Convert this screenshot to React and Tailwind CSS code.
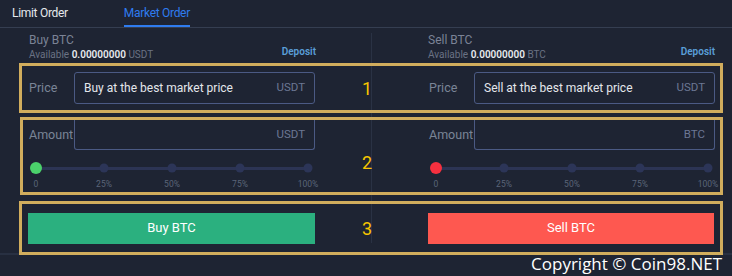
const LABELS = ['0', '25%', '50%', '75%', '100%'];
const SPOTS = ['left-0', 'left-1/4', 'left-1/2', 'left-3/4', 'left-full'];

function Info({ title, unit }) {
  return (
    <div className="w-[287px]">
      <p className="text-[12px] leading-[15px] text-[#7b8396]">{title}</p>
      <div className="flex h-[14px] items-center justify-between">
        <p className="text-[10px] leading-[14px] text-[#6a7284]">
          Available <span className="font-semibold text-[#e9ebef]">0.00000000</span> {unit}
        </p>
        <span className="mb-[6px] text-[10px] font-semibold leading-[12px] text-[#5a9fd9]">Deposit</span>
      </div>
    </div>
  );
}

function Field({ label, text, unit, open }) {
  return (
    <div className="flex w-[287px] items-start">
      <span className={`w-[46px] pl-px text-[12.5px] text-[#7a8497] ${open ? 'leading-[30px]' : 'leading-[32px]'}`}>{label}</span>
      <div
        className={`flex w-[241px] items-center justify-between rounded-[3px] border border-[#4b5a84] px-[9px] ${
          open ? 'h-[30px] rounded-t-none border-t-0' : 'h-[32px]'
        }`}
      >
        <span className="text-[12px] text-[#e4e7ec]">{text}</span>
        <span className="text-[11.5px] text-[#6c7794]">{unit}</span>
      </div>
    </div>
  );
}

function Slider({ color }) {
  return (
    <div className="w-[287px]">
      <div className="relative ml-[8px] mr-[7px] mt-[11px] h-[14px]">
        <div className="absolute inset-x-0 top-[6px] h-[3px] bg-[#2c3454]" />
        {SPOTS.map((spot, i) => (
          <span
            className={`absolute top-1/2 -translate-x-1/2 -translate-y-1/2 rounded-full ${spot} ${
              i === 0 ? `h-[12px] w-[12px] ${color}` : 'h-[9px] w-[9px] bg-[#2c3558]'
            }`}
            key={spot}
          />
        ))}
      </div>
      <div className="relative ml-[8px] mr-[7px] mt-[3px] h-[12px]">
        {LABELS.map((label, i) => (
          <span className={`absolute top-0 -translate-x-1/2 text-[8.5px] leading-[12px] text-[#5b6479] ${SPOTS[i]}`} key={label}>
            {label}
          </span>
        ))}
      </div>
    </div>
  );
}

function Mark({ n, className = '' }) {
  return (
    <div className={`flex w-[113px] justify-center self-stretch pr-[9px] ${className}`}>
      <span className="flex items-center text-[18px] text-[#f7c600]">{n}</span>
    </div>
  );
}

export default function App() {
  return (
    <div className="relative h-[276px] w-[732px] overflow-hidden bg-[#1e2433] font-['Roboto',sans-serif]">
      <div className="absolute left-[371px] top-[33px] h-[210px] w-px bg-[#2a3244]" />
      <div className="absolute left-0 right-0 top-[253px] h-[2px] bg-[#283042]" />

      <header className="flex h-[28px] border-b border-[#353e51] pl-[12px]">
        <span className="flex items-center pb-[2px] text-[12px] tracking-[-0.3px] text-[#e6e8ec]">Limit Order</span>
        <span className="ml-[56px] flex items-center border-b-2 border-[#2f7cf0] text-[12px] tracking-[-0.3px] text-[#2f7cf0]">
          Market Order
        </span>
      </header>

      <section className="relative flex pl-[29px] pt-[5px]">
        <Info title="Buy BTC" unit="USDT" />
        <div className="w-[112px]" />
        <Info title="Sell BTC" unit="BTC" />
      </section>

      <div className="relative ml-[19px] mt-px flex h-[50px] w-[704px] items-center border-[3px] border-[#d1ad5d] pl-[6px]">
        <Field label="Price" text="Buy at the best market price" unit="USDT" />
        <Mark n="1" />
        <Field label="Price" text="Sell at the best market price" unit="USDT" />
      </div>

      <div className="relative ml-[20px] mt-[4px] flex h-[78px] w-[703px] border-[3px] border-[#d1ad5d] pl-[5px]">
        <div>
          <Field label="Amount" unit="USDT" open />
          <Slider color="bg-[#4bd16b]" />
        </div>
        <Mark n="2" className="pt-[12px]" />
        <div>
          <Field label="Amount" unit="BTC" open />
          <Slider color="bg-[#f5303f]" />
        </div>
      </div>

      <div className="relative ml-[19px] mt-[6px] flex h-[54px] w-[704px] items-center border-[3px] border-[#d1ad5d] pl-[6px]">
        <button className="h-[31px] w-[287px] bg-[#2bb07f] text-[13px] text-white" type="button">
          Buy BTC
        </button>
        <Mark n="3" />
        <button className="h-[31px] w-[286px] bg-[#fe5850] text-[13px] text-white" type="button">
          Sell BTC
        </button>
      </div>

      <p className="relative pr-[10px] text-right font-['Open_Sans',sans-serif] text-[17px] font-medium leading-[18px] text-white">
        Copyright © Coin98.NET
      </p>
    </div>
  );
}
